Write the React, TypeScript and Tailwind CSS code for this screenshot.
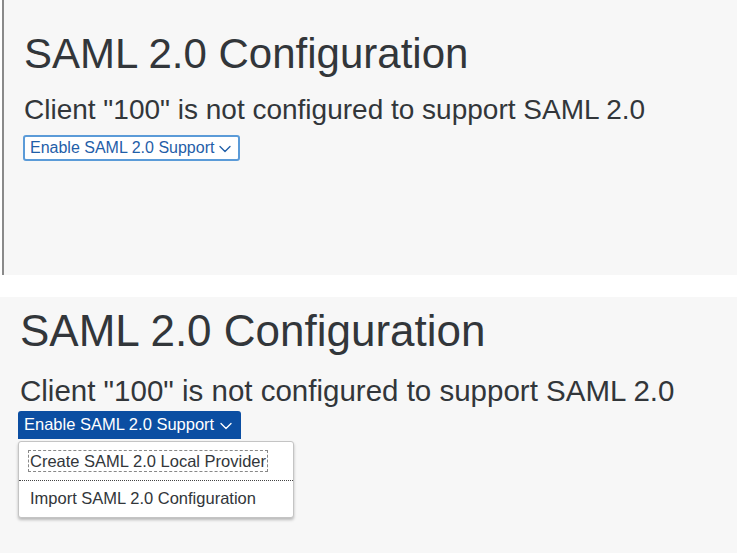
import { ChevronDown } from "lucide-react"

const font = { fontFamily: '"Liberation Sans", Arial, sans-serif' }

export default function App() {
    return (
        <div className="w-[737px] h-[558px] bg-white text-[#32363a]" style={font}>
            <section className="h-[275px] ml-[2px] border-l-2 border-[#8a8a8a] bg-[#f7f7f7] pl-[20px] pt-[33px]">
                <h1 className="text-[42px] leading-none">SAML 2.0 Configuration</h1>
                <p className="mt-[21px] text-[28px] leading-none">
                    Client "100" is not configured to support SAML 2.0
                </p>
                <button className="mt-[11px] -ml-[1px] flex items-center gap-[1px] h-[26px] pl-[5px] pr-[3px] rounded-[3px] border-2 border-[#5b9bd8] bg-white text-[16px] text-[#1f5ea8]">
                    Enable SAML 2.0 Support
                    <ChevronDown size={20} strokeWidth={1.6} className="mt-[2px]" />
                </button>
            </section>

            <section className="mt-[22px] h-[256px] bg-[#f7f7f7] pl-[18px] pt-[12px]">
                <h1 className="pl-[2px] text-[44px] leading-none">SAML 2.0 Configuration</h1>
                <p className="pl-[2px] mt-[23px] text-[29.5px] leading-none">
                    Client "100" is not configured to support SAML 2.0
                </p>
                <div className="mt-[5px] w-[276px]">
                    <button className="flex items-center gap-[2px] h-[28px] pl-[6px] pr-[5px] rounded-t-[3px] bg-[#0b4ea2] text-[16.5px] text-white">
                        Enable SAML 2.0 Support
                        <ChevronDown size={20} strokeWidth={1.6} className="mt-[2px]" />
                    </button>
                    <ul className="mt-[2px] rounded-[3px] border border-[#c4c4c4] bg-white shadow-[0_2px_3px_rgba(0,0,0,0.25)] text-[16.5px]">
                        <li className="h-[39px] flex items-center pl-[9px] border-b border-dotted border-[#444]">
                            <span className="border border-dashed border-[#888] px-[1px] leading-[20px]">
                                Create SAML 2.0 Local Provider
                            </span>
                        </li>
                        <li className="h-[36px] flex items-center pl-[11px]">
                            Import SAML 2.0 Configuration
                        </li>
                    </ul>
                </div>
            </section>
        </div>
    )
}
